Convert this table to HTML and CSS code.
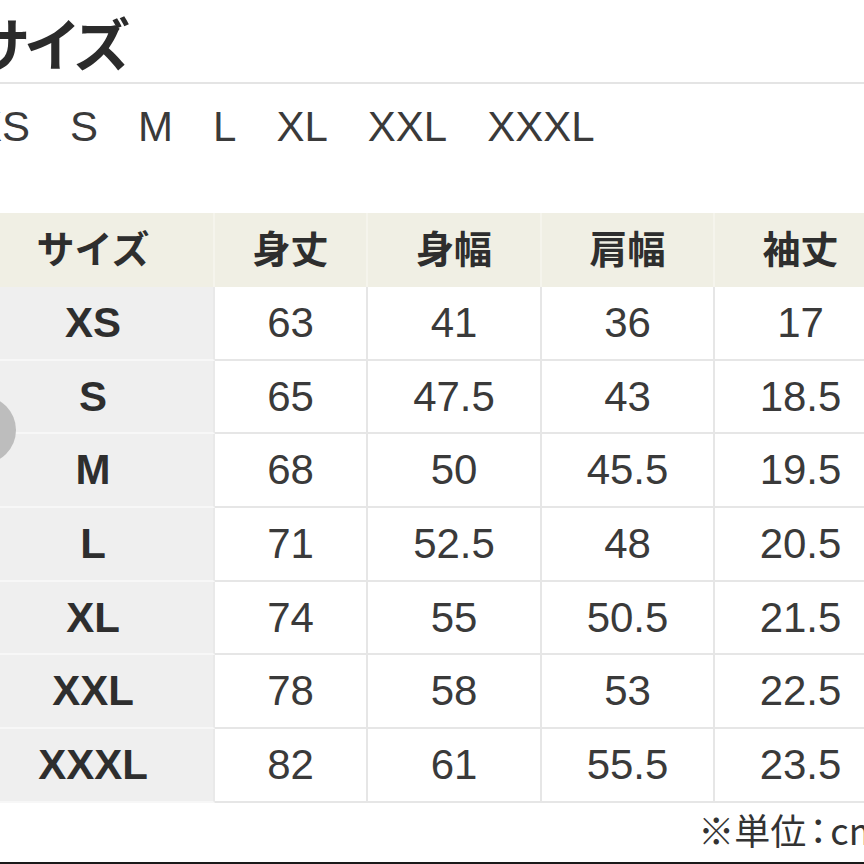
FILE: index.html
```html
<!DOCTYPE html>
<html lang="ja">
<head>
<meta charset="utf-8">
<title>サイズ</title>
<link rel="stylesheet" href="styles.css">
</head>
<body>
<div class="page">
  <h1 class="title">サイズ</h1>
  <div class="rule"></div>
  <ul class="sizes">
    <li>XS</li><li>S</li><li>M</li><li>L</li><li>XL</li><li>XXL</li><li>XXXL</li>
  </ul>
  <div class="chart">
    <div class="cell head">サイズ</div>
    <div class="cell head">身丈</div>
    <div class="cell head">身幅</div>
    <div class="cell head">肩幅</div>
    <div class="cell head">袖丈</div>

    <div class="cell size">XS</div><div class="cell">63</div><div class="cell">41</div><div class="cell">36</div><div class="cell">17</div>
    <div class="cell size">S</div><div class="cell">65</div><div class="cell">47.5</div><div class="cell">43</div><div class="cell">18.5</div>
    <div class="cell size">M</div><div class="cell">68</div><div class="cell">50</div><div class="cell">45.5</div><div class="cell">19.5</div>
    <div class="cell size">L</div><div class="cell">71</div><div class="cell">52.5</div><div class="cell">48</div><div class="cell">20.5</div>
    <div class="cell size">XL</div><div class="cell">74</div><div class="cell">55</div><div class="cell">50.5</div><div class="cell">21.5</div>
    <div class="cell size">XXL</div><div class="cell">78</div><div class="cell">58</div><div class="cell">53</div><div class="cell">22.5</div>
    <div class="cell size">XXXL</div><div class="cell">82</div><div class="cell">61</div><div class="cell">55.5</div><div class="cell">23.5</div>
  </div>
  <p class="unit">※単位<span class="colon">：</span>cm</p>
  <div class="nav-btn"></div>
</div>
</body>
</html>
```
FILE: styles.css
```css
body {
  margin: 0;
  background: #ffffff;
}

.page {
  position: relative;
  width: 864px;
  height: 864px;
  box-sizing: border-box;
  overflow: hidden;
  border-bottom: 2px solid #1a1a1a;
  font-family: "Liberation Sans", "Noto Sans CJK JP", sans-serif;
  color: #333333;
}

.title {
  margin: 0 0 0 -27px;
  padding-top: 12px;
  font-family: "Noto Sans CJK JP", sans-serif;
  font-weight: 700;
  font-size: 57px;
  line-height: 58px;
  letter-spacing: -6px;
  color: #2b2b2b;
}

.rule {
  margin-top: 12px;
  height: 2px;
  background: #e4e4e4;
}

.sizes {
  list-style: none;
  margin: 22px 0 0 -26px;
  padding: 0;
  display: flex;
  gap: 40px;
  font-size: 42px;
  line-height: 42px;
  color: #3a3a3a;
}

.chart {
  margin: 65px 0 0 -27px;
  display: grid;
  grid-template-columns: 242px 153px 174px 173px 173px;
  grid-template-rows: 74px repeat(7, 73.7px);
  width: 915px;
}

.cell {
  display: flex;
  align-items: center;
  justify-content: center;
  box-sizing: border-box;
  background: #ffffff;
  border-right: 2px solid #e6e6e6;
  border-bottom: 2px solid #e6e6e6;
  font-size: 42px;
  color: #3a3a3a;
}

.cell.head {
  padding-bottom: 8px;
  background: #f0efe4;
  border-right-color: #f5f4ec;
  border-bottom: 0;
  font-family: "Noto Sans CJK JP", sans-serif;
  font-weight: 700;
  font-size: 38px;
  color: #2e2e2e;
}

.cell.size {
  background: #efefef;
  border-bottom-color: #f7f7f7;
  border-right-color: #e9e9e9;
  font-weight: 700;
  color: #2e2e2e;
}

.unit {
  margin: 8px -18px 0 0;
  display: flex;
  justify-content: flex-end;
  font-family: "Noto Sans CJK JP", sans-serif;
  font-weight: 400;
  font-size: 36px;
  line-height: 36px;
  font-feature-settings: "palt";
  color: #333333;
}

.colon {
  padding: 0 3px;
}

.nav-btn {
  position: absolute;
  left: -52px;
  top: 396px;
  width: 68px;
  height: 68px;
  border-radius: 50%;
  background: #bdbdbd;
}
```
